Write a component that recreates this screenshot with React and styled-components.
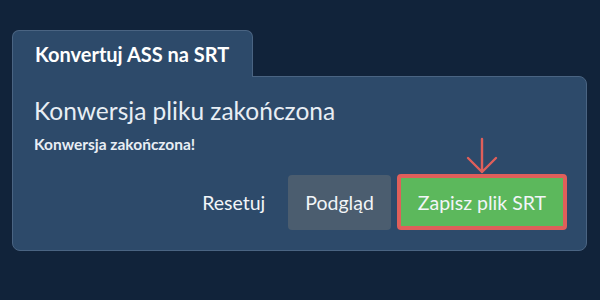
import React from "react";
import styled, { createGlobalStyle } from "styled-components";

const GlobalStyle = createGlobalStyle`
  html, body {
    margin: 0;
    padding: 0;
    background: #11233a;
    font-family: Lato, "Open Sans", sans-serif;
  }
`;

const Page = styled.div`
  width: 600px;
  height: 300px;
  box-sizing: border-box;
  padding: 30px 13px 0 12px;
`;

const Tab = styled.div`
  position: relative;
  z-index: 1;
  box-sizing: border-box;
  width: 241px;
  height: 47px;
  margin-bottom: -1px;
  padding: 11px 0 0 22px;
  background: #2d4a6a;
  border: 1px solid #4a6482;
  border-bottom: none;
  border-radius: 7px 7px 0 0;
  color: #ffffff;
  font-size: 20px;
  font-weight: 700;
  line-height: 24px;
`;

const Panel = styled.div`
  box-sizing: border-box;
  height: 175px;
  padding: 19px 19px 20px 21px;
  background: #2d4a6a;
  border: 1px solid #4a6482;
  border-radius: 0 8px 8px 8px;
  display: flex;
  flex-direction: column;
  color: #e8eef4;
`;

const Heading = styled.h2`
  margin: 0;
  font-size: 24.5px;
  font-weight: 400;
  line-height: 30px;
`;

const Note = styled.p`
  margin: 9px 0 0;
  font-size: 15.5px;
  font-weight: 700;
  line-height: 18px;
`;

const Actions = styled.div`
  margin-top: auto;
  display: flex;
  justify-content: flex-end;
  align-items: center;
  gap: 6px;
`;

const Button = styled.button`
  position: relative;
  box-sizing: border-box;
  height: ${(p) => (p.$variant === "save" ? "56px" : "55px")};
  padding: 0 ${(p) => (p.$variant === "text" ? "0" : "17px")};
  margin-right: ${(p) => (p.$variant === "text" ? "17px" : "0")};
  border: ${(p) => (p.$variant === "save" ? "4px solid #df5f5a" : "none")};
  border-radius: 4px;
  background: ${(p) =>
    p.$variant === "save" ? "#5cb85c" : p.$variant === "gray" ? "#4b5d6f" : "transparent"};
  color: #f2f5f8;
  font-family: Lato, "Open Sans", sans-serif;
  font-size: 19.5px;
  cursor: pointer;
`;

const Pointer = styled.svg`
  position: absolute;
  left: 50%;
  bottom: 100%;
  margin-bottom: 3px;
  transform: translateX(-50%);
`;

export default function App() {
  return (
    <>
      <GlobalStyle />
      <Page>
        <Tab>Konvertuj ASS na SRT</Tab>
        <Panel>
          <Heading>Konwersja pliku zakończona</Heading>
          <Note>Konwersja zakończona!</Note>
          <Actions>
            <Button $variant="text">Resetuj</Button>
            <Button $variant="gray">Podgląd</Button>
            <Button $variant="save">
              <Pointer width="32" height="38" viewBox="0 0 32 38" fill="none">
                <path
                  d="M16 2 V35 M2 21 L16 35 L30 21"
                  stroke="#df5f5a"
                  strokeWidth="2.4"
                  strokeLinecap="round"
                  strokeLinejoin="round"
                />
              </Pointer>
              Zapisz plik SRT
            </Button>
          </Actions>
        </Panel>
      </Page>
    </>
  );
}
